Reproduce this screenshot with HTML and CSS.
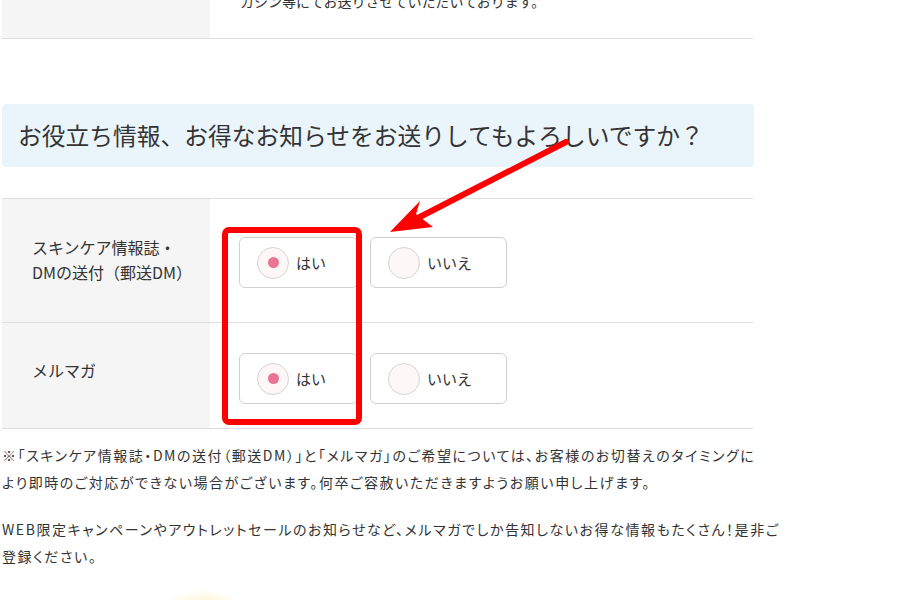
FILE: index.html
```html
<!DOCTYPE html>
<html lang="ja">
<head>
<meta charset="utf-8">
<title>お知らせ設定</title>
<link rel="stylesheet" href="styles.css">
</head>
<body>
<div class="page">
  <div class="prev-table">
    <div class="prev-row">
      <div class="th"></div>
      <div class="td"><p class="prev-text">カシン等にてお送りさせていただいております。</p></div>
    </div>
  </div>

  <h2 class="section-title">お役立ち情報、お得なお知らせをお送りしてもよろしいですか？</h2>

  <div class="form-table">
    <div class="row row-dm">
      <div class="th">スキンケア情報誌・<br>DMの送付（郵送DM）</div>
      <div class="td">
        <div class="choices">
          <label class="choice choice-yes"><span class="radio checked"></span><span class="choice-text">はい</span></label>
          <label class="choice choice-no"><span class="radio"></span><span class="choice-text">いいえ</span></label>
        </div>
      </div>
    </div>
    <div class="row row-mail">
      <div class="th">メルマガ</div>
      <div class="td">
        <div class="choices">
          <label class="choice choice-yes"><span class="radio checked"></span><span class="choice-text">はい</span></label>
          <label class="choice choice-no"><span class="radio"></span><span class="choice-text">いいえ</span></label>
        </div>
      </div>
    </div>
  </div>

  <div class="notes">
    <p>※「スキンケア情報誌・DMの送付（郵送DM）」と「メルマガ」のご希望については、お客様のお切替えのタイミングに<br>より即時のご対応ができない場合がございます。何卒ご容赦いただきますようお願い申し上げます。</p>
    <p>WEB限定キャンペーンやアウトレットセールのお知らせなど、メルマガでしか告知しないお得な情報もたくさん！是非ご<br>登録ください。</p>
  </div>

  <div class="badge-glow"></div>

  <div class="highlight-box"></div>
  <svg class="annot-arrow" width="905" height="600" viewBox="0 0 905 600">
    <line x1="566" y1="142" x2="412" y2="221" stroke="#ff0000" stroke-width="6" stroke-linecap="round"/>
    <polygon points="390,232 420,201 416,214 433,227" fill="#ff0000"/>
  </svg>
</div>
</body>
</html>
```

FILE: styles.css
```css
* { box-sizing: border-box; }
html, body { margin: 0; padding: 0; background: #fff; }
body {
  font-family: "Noto Sans CJK JP", "Noto Sans", sans-serif;
  color: #333;
  overflow: hidden;
  height: 600px;
}
.page {
  position: relative;
  width: 905px;
  height: 600px;
  padding-left: 2px;
  overflow: hidden;
}
.prev-table { width: 751px; }
.prev-row {
  display: flex;
  height: 39px;
  border-bottom: 1px solid #dedede;
  overflow: hidden;
}
.prev-row .th { width: 208px; background: #f5f5f5; flex: none; }
.prev-row .td { padding-left: 30px; }
.prev-text {
  margin: -11px 0 0;
  font-size: 14px;
  line-height: 25px;
}
.section-title {
  margin: 65px 0 0;
  width: 752px;
  height: 63px;
  background: #eaf5fb;
  border-radius: 4px;
  padding: 0 0 2px 16px;
  font-size: 23.75px;
  font-weight: 400;
  line-height: 61px;
  color: #333;
}
.form-table {
  margin-top: 31px;
  width: 751px;
  border-top: 1px solid #dedede;
}
.row {
  display: flex;
  border-bottom: 1px solid #dedede;
}
.row .th {
  width: 208px;
  flex: none;
  background: #f5f5f5;
  padding: 36px 0 0 30px;
  font-size: 16px;
  line-height: 25px;
  color: #333;
}
.row .td { padding-left: 29px; }
.row-dm { height: 124px; }
.row-dm .td { padding-top: 38px; }
.row-mail { height: 106px; }
.row-mail .th { padding-top: 35px; }
.row-mail .td { padding-top: 30px; }
.choices { display: flex; gap: 12px; }
.choice {
  display: flex;
  align-items: center;
  height: 51px;
  border: 1px solid #d0d0d0;
  border-radius: 6px;
  padding-left: 17px;
  background: #fff;
  font-size: 15px;
  color: #333;
}
.choice-yes { width: 119px; }
.choice-no { width: 137px; }
.radio {
  width: 32px;
  height: 32px;
  border-radius: 50%;
  border: 1px solid #d9d4d4;
  background: #fdf7f7;
  display: flex;
  align-items: center;
  justify-content: center;
  margin-right: 7px;
  flex: none;
}
.radio.checked::after {
  content: "";
  width: 11px;
  height: 11px;
  border-radius: 50%;
  background: #ea7592;
}
.notes {
  margin-top: 13px;
  font-size: 14px;
  line-height: 27px;
  white-space: nowrap;
  font-feature-settings: "palt";
  letter-spacing: 1.55px;
  color: #333;
}
.notes p { margin: 0 0 20px; }
.badge-glow {
  margin: 16px 0 0 138px;
  width: 128px;
  height: 128px;
  border-radius: 50%;
  background: radial-gradient(circle at 50% 50%, #fdeeb8 0%, #fef4d4 55%, rgba(255,250,235,0) 72%);
}
.highlight-box {
  position: absolute;
  left: 222px;
  top: 227px;
  width: 140px;
  height: 198px;
  border: 6px solid #ff0000;
  border-radius: 7px;
}
.annot-arrow {
  position: absolute;
  left: 0;
  top: 0;
  pointer-events: none;
}
```
